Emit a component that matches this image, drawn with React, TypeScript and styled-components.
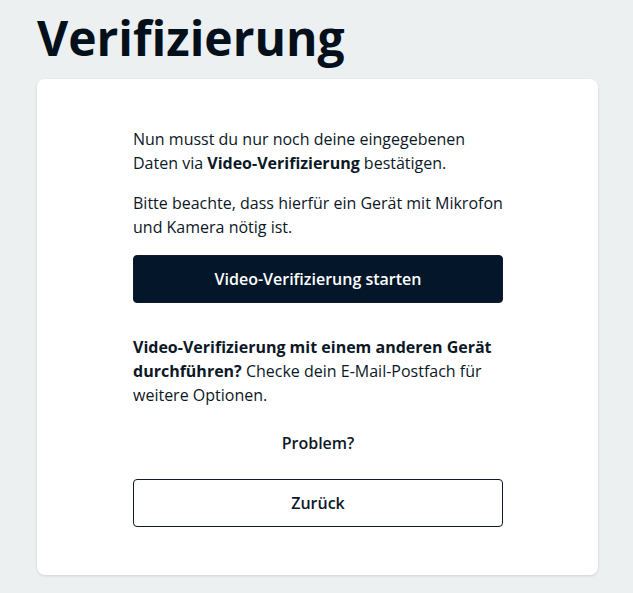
import styled, { createGlobalStyle } from "styled-components";

const GlobalStyle = createGlobalStyle`
  html, body {
    margin: 0;
    padding: 0;
    background: #ecf0f1;
  }
  body {
    font-family: "Open Sans", "Noto Sans", sans-serif;
    color: #0c1826;
  }
`;

const Page = styled.div`
  padding: 6px 35px 18px 37px;
`;

const Title = styled.h1`
  margin: 0 0 9px 0;
  font-size: 48px;
  line-height: 64px;
  font-weight: 700;
  color: #03101b;
`;

const Card = styled.div`
  background: #fff;
  border-radius: 8px;
  box-shadow: 0 1px 3px rgba(0, 0, 0, 0.12);
  padding: 48px 95px 48px 96px;
`;

const Text = styled.p<{ $gap?: number; $top?: number }>`
  margin: ${(p) => p.$top ?? 0}px 0 ${(p) => p.$gap ?? 16}px 0;
  font-size: 16px;
  line-height: 24px;
  color: #0c1826;
`;

const Center = styled(Text)`
  text-align: center;
  font-weight: 600;
`;

const Button = styled.button<{ $variant?: "primary" | "outline" }>`
  display: block;
  width: 100%;
  height: 48px;
  border-radius: 4px;
  font-family: inherit;
  font-size: 16px;
  font-weight: 600;
  cursor: pointer;
  background: ${(p) => (p.$variant === "outline" ? "#fff" : "#04172a")};
  color: ${(p) => (p.$variant === "outline" ? "#0c1a2b" : "#fff")};
  border: 1px solid #0c1a2b;
`;

export default function App() {
  return (
    <>
      <GlobalStyle />
      <Page>
        <Title>Verifizierung</Title>
        <Card>
          <Text>
            Nun musst du nur noch deine eingegebenen Daten via{" "}
            <b>Video-Verifizierung</b> bestätigen.
          </Text>
          <Text>
            Bitte beachte, dass hierfür ein Gerät mit Mikrofon und Kamera nötig
            ist.
          </Text>
          <Button>Video-Verifizierung starten</Button>
          <Text $top={32} $gap={24}>
            <b>Video-Verifizierung mit einem anderen Gerät durchführen?</b>{" "}
            Checke dein E-Mail-Postfach für weitere Optionen.
          </Text>
          <Center $gap={24}>Problem?</Center>
          <Button $variant="outline">Zurück</Button>
        </Card>
      </Page>
    </>
  );
}
